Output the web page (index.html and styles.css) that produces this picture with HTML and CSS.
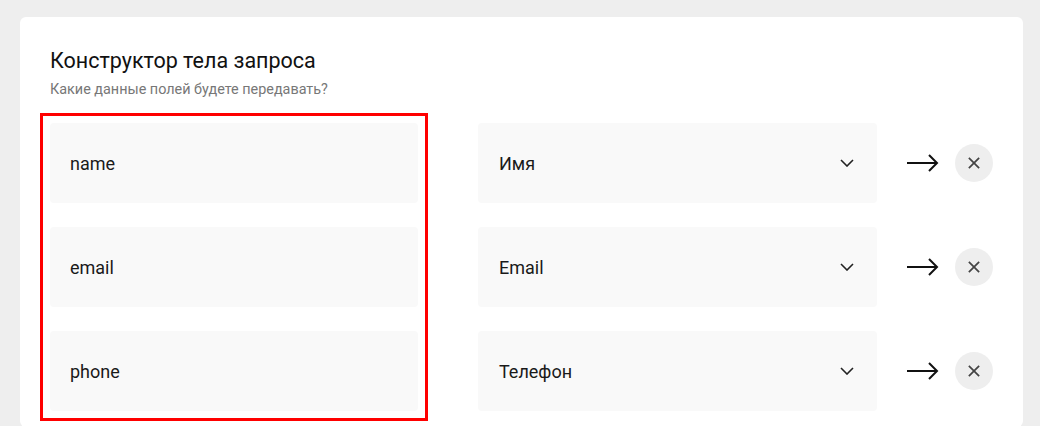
FILE: index.html
```html
<!DOCTYPE html>
<html lang="ru">
<head>
    <meta charset="UTF-8">
    <meta name="viewport" content="width=device-width, initial-scale=1.0">
    <title>Конструктор тела запроса</title>
    <link rel="stylesheet" href="styles.css">
</head>
<body>
    <div class="card">
        <h1>Конструктор тела запроса</h1>
        <p class="hint">Какие данные полей будете передавать?</p>

        <div class="builder">
            <div class="keys">
                <div class="field">name</div>
                <div class="field">email</div>
                <div class="field">phone</div>
            </div>

            <div class="values">
                <div class="select">
                    <span>Имя</span>
                    <svg class="chevron" width="14" height="8" viewBox="0 0 14 8"><path d="M1 1l6 6 6-6" fill="none" stroke="#222" stroke-width="1.6"/></svg>
                </div>
                <div class="select">
                    <span>Email</span>
                    <svg class="chevron" width="14" height="8" viewBox="0 0 14 8"><path d="M1 1l6 6 6-6" fill="none" stroke="#222" stroke-width="1.6"/></svg>
                </div>
                <div class="select">
                    <span>Телефон</span>
                    <svg class="chevron" width="14" height="8" viewBox="0 0 14 8"><path d="M1 1l6 6 6-6" fill="none" stroke="#222" stroke-width="1.6"/></svg>
                </div>
            </div>

            <div class="actions">
                <div class="action-row">
                    <svg class="arrow" width="32" height="18" viewBox="0 0 32 18"><path d="M0 9h30M22 1l8 8-8 8" fill="none" stroke="#111" stroke-width="2"/></svg>
                    <button class="remove"><svg width="14" height="14" viewBox="0 0 14 14"><path d="M1 1l12 12M13 1L1 13" stroke="#444" stroke-width="2"/></svg></button>
                </div>
                <div class="action-row">
                    <svg class="arrow" width="32" height="18" viewBox="0 0 32 18"><path d="M0 9h30M22 1l8 8-8 8" fill="none" stroke="#111" stroke-width="2"/></svg>
                    <button class="remove"><svg width="14" height="14" viewBox="0 0 14 14"><path d="M1 1l12 12M13 1L1 13" stroke="#444" stroke-width="2"/></svg></button>
                </div>
                <div class="action-row">
                    <svg class="arrow" width="32" height="18" viewBox="0 0 32 18"><path d="M0 9h30M22 1l8 8-8 8" fill="none" stroke="#111" stroke-width="2"/></svg>
                    <button class="remove"><svg width="14" height="14" viewBox="0 0 14 14"><path d="M1 1l12 12M13 1L1 13" stroke="#444" stroke-width="2"/></svg></button>
                </div>
            </div>
        </div>
    </div>
</body>
</html>
```

FILE: styles.css
```css
body {
    font-family: Roboto, "Liberation Sans", sans-serif;
    background: #eeeeee;
    color: #111;
    margin: 0;
    padding: 17px 17px 0 20px;
}
.card {
    background: #fff;
    border-radius: 6px;
    padding: 29px 30px 16px 30px;
}
h1 {
    margin: 0;
    font-size: 21.5px;
    font-weight: 400;
    line-height: 30px;
}
.hint {
    margin: 5px 0 0;
    font-size: 14.4px;
    color: #777;
    line-height: 18px;
}
.builder {
    display: flex;
    align-items: flex-start;
    margin-top: 24px;
}
.keys,
.values,
.actions {
    display: flex;
    flex-direction: column;
    gap: 24px;
}
.keys {
    width: 368px;
    outline: 3px solid #ff0000;
    outline-offset: 7px;
}
.values {
    width: 399px;
    margin-left: 60px;
}
.actions {
    margin-left: 30px;
}
.field,
.select {
    height: 80px;
    background: #f9f9f9;
    border-radius: 4px;
    display: flex;
    align-items: center;
    padding: 0 20px;
    font-size: 18px;
    color: #1a1a1a;
    box-sizing: border-box;
}
.select {
    padding-left: 21px;
    justify-content: space-between;
    padding-right: 23px;
}
.chevron {
    display: block;
}
.action-row {
    height: 80px;
    display: flex;
    align-items: center;
    gap: 16px;
}
.arrow {
    display: block;
}
.remove {
    width: 38px;
    height: 38px;
    border: none;
    border-radius: 50%;
    background: #eeeeee;
    display: flex;
    align-items: center;
    justify-content: center;
    padding: 0;
    cursor: pointer;
}
.remove svg {
    width: 12px;
    height: 12px;
}
```
